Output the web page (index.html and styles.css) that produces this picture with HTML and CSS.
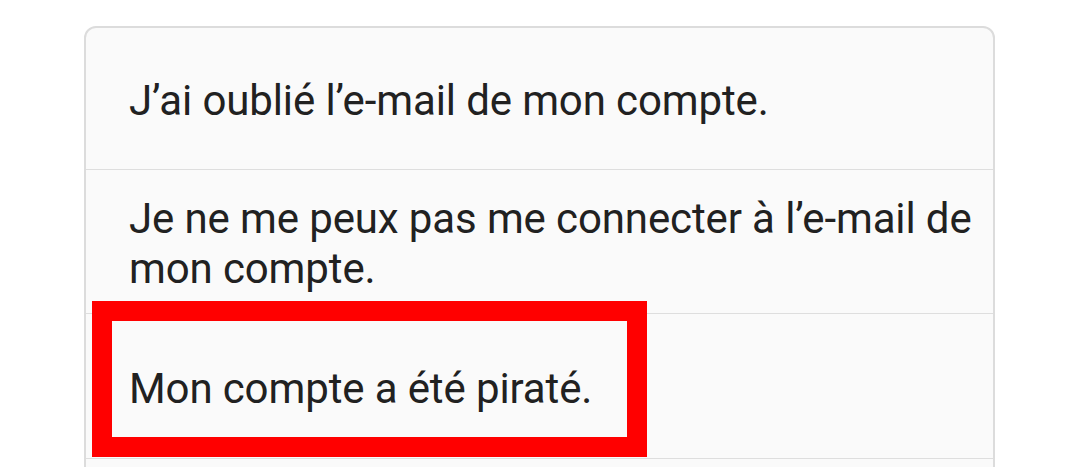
FILE: index.html
```html
<!DOCTYPE html>
<html lang="fr">
<head>
<meta charset="utf-8">
<title>Aide compte</title>
<link rel="stylesheet" href="styles.css">
</head>
<body>
  <div class="card">
    <div class="row row-first">J’ai oublié l’e-mail de mon compte.</div>
    <div class="row row-second">Je ne me peux pas me connecter à l’e-mail de mon compte.</div>
    <div class="row row-third">Mon compte a été piraté.</div>
    <div class="row row-empty"></div>
    <div class="highlight"></div>
  </div>
</body>
</html>
```

FILE: styles.css
```css
html, body {
  margin: 0;
  padding: 0;
  background: #ffffff;
  overflow: hidden;
}

body {
  height: 467px;
  font-family: Roboto, "Noto Sans", sans-serif;
  color: #212121;
}

.card {
  position: relative;
  margin: 26px 0 0 84px;
  width: 911px;
  box-sizing: border-box;
  border: 2px solid #dcdcdc;
  border-radius: 12px;
  background: #fafafa;
}

.row {
  display: flex;
  align-items: center;
  box-sizing: border-box;
  padding: 5px 10px 0 43px;
  font-size: 42px;
  line-height: 50px;
  letter-spacing: -0.12px;
  border-top: 1px solid #dedede;
}

.row-first {
  border-top: none;
  height: 141px;
}

.row-second {
  height: 144px;
}

.row-third {
  height: 145px;
}

.row-empty {
  height: 60px;
}

.highlight {
  position: absolute;
  left: 6px;
  top: 273px;
  width: 555px;
  height: 156px;
  box-sizing: border-box;
  border: 20px solid #ff0000;
}
```
